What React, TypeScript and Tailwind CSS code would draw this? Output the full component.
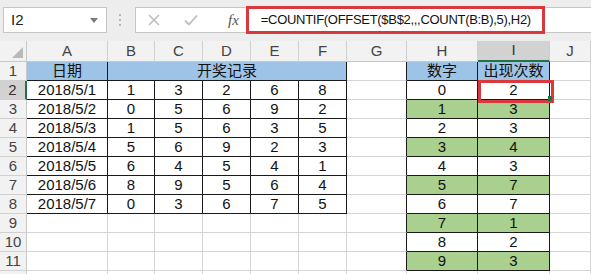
import React from "react";

const COLS = ["", "A", "B", "C", "D", "E", "F", "G", "H", "I", "J"];
const BLACK = "#1a1a1a";
const GRID = "#d4d4d4";

const left: string[][] = [
  ["2018/5/1", "1", "3", "2", "6", "8"],
  ["2018/5/2", "0", "5", "6", "9", "2"],
  ["2018/5/3", "1", "5", "6", "3", "5"],
  ["2018/5/4", "5", "6", "9", "2", "3"],
  ["2018/5/5", "6", "4", "5", "4", "1"],
  ["2018/5/6", "8", "9", "5", "6", "4"],
  ["2018/5/7", "0", "3", "6", "7", "5"],
];
const counts = ["2", "3", "3", "4", "3", "7", "7", "1", "2", "3"];

function inTable(r: number, c: number) {
  if (r >= 1 && r <= 8 && c >= 1 && c <= 6) return true;
  if (r >= 1 && r <= 11 && c >= 8 && c <= 9) return true;
  return false;
}

function cellContent(r: number, c: number): { text: string; bg: string } {
  let text = "";
  let bg = "#ffffff";
  if (r === 1) {
    if (c === 1) { text = "日期"; bg = "#9dc3e6"; }
    if (c === 8) { text = "数字"; bg = "#9dc3e6"; }
    if (c === 9) { text = "出现次数"; bg = "#9dc3e6"; }
  } else {
    if (r >= 2 && r <= 8 && c >= 1 && c <= 6) text = left[r - 2][c - 1];
    if (r >= 2 && r <= 11 && (c === 8 || c === 9)) {
      const n = r - 2;
      text = c === 8 ? String(n) : counts[n];
      if (n % 2 === 1) bg = "#a9d08e";
    }
  }
  return { text, bg };
}

export default function App() {
  const font = { fontFamily: '"Liberation Sans", "Noto Sans CJK SC", sans-serif' };
  const rows: React.ReactNode[] = [];

  COLS.forEach((col, c) => {
    if (c === 0) {
      rows.push(
        <div key="corner" className="relative h-[21px] border-r border-b border-[#c8c8c8] bg-[#f2f2f2]">
          <div
            className="absolute right-[3px] bottom-[3px] h-0 w-0"
            style={{ borderBottom: "11px solid #b9b9b9", borderLeft: "11px solid transparent" }}
          />
        </div>
      );
    } else {
      const sel = col === "I";
      rows.push(
        <div
          key={"h" + c}
          className={`flex h-[21px] items-center justify-center border-r border-r-[#d0d0d0] text-[15px] ${sel ? "bg-[#d2d2d2] border-b-2 border-b-[#217346] text-[#333]" : "bg-[#f2f2f2] border-b border-b-[#c8c8c8] text-[#444]"}`}
        >
          {col}
        </div>
      );
    }
  });

  for (let r = 1; r <= 12; r++) {
    const sel = r === 2;
    rows.push(
      <div
        key={"r" + r}
        className={`flex h-[19px] items-center justify-center border-b border-b-[#d0d0d0] text-[15px] ${sel ? "bg-[#d2d2d2] border-r-2 border-r-[#217346] text-[#333]" : "bg-[#f2f2f2] border-r border-r-[#c8c8c8] text-[#444]"}`}
      >
        {r <= 11 ? r : ""}
      </div>
    );
    for (let c = 1; c <= 10; c++) {
      if (r === 1 && c >= 3 && c <= 6) continue;
      const merged = r === 1 && c === 2;
      const lastC = merged ? 6 : c;
      const { text, bg } = merged ? { text: "开奖记录", bg: "#9dc3e6" } : cellContent(r, c);
      const rightBlack = inTable(r, lastC) || inTable(r, lastC + 1);
      const bottomBlack = inTable(r, c) || inTable(r + 1, c);
      rows.push(
        <div
          key={r + "-" + c}
          className={`flex h-[19px] items-center justify-center overflow-hidden whitespace-nowrap border-r border-b text-[15px] text-[#111] ${merged ? "col-span-5" : ""}`}
          style={{
            backgroundColor: bg,
            borderRightColor: rightBlack ? BLACK : GRID,
            borderBottomColor: bottomBlack ? BLACK : GRID,
          }}
        >
          {text}
        </div>
      );
    }
  }

  return (
    <div className="relative h-[274px] w-[591px] overflow-hidden bg-white" style={font}>
      {/* formula bar */}
      <div className="flex h-[41px] items-start bg-[#ededed] pt-[7px]">
        <div className="ml-[3px] flex h-[26px] w-[104px] items-center justify-between border border-[#c6c6c6] bg-white pl-[7px] pr-[8px] text-[15px] text-[#222]">
          <span>I2</span>
          <span className="h-0 w-0 border-x-[4px] border-t-[5px] border-x-transparent border-t-[#7a7a7a]" />
        </div>
        <div className="ml-[12px] mt-[7px] flex flex-col gap-[3px]">
          <span className="h-[2px] w-[2px] bg-[#b5b5b5]" />
          <span className="h-[2px] w-[2px] bg-[#b5b5b5]" />
          <span className="h-[2px] w-[2px] bg-[#b5b5b5]" />
        </div>
        <div className="ml-[14px] flex h-[26px] flex-1 items-center border border-r-0 border-[#c6c6c6] bg-white">
          <svg width="12" height="12" viewBox="0 0 12 12" className="ml-[12px]">
            <path d="M1 1 L11 11 M11 1 L1 11" stroke="#bdbdbd" strokeWidth="1.6" />
          </svg>
          <svg width="14" height="12" viewBox="0 0 14 12" className="ml-[24px]">
            <path d="M1 6.5 L5 10.5 L13 1.5" stroke="#bdbdbd" strokeWidth="1.8" fill="none" />
          </svg>
          <span className="ml-[30px] text-[15px] italic text-[#555]" style={{ fontFamily: '"Liberation Serif", serif' }}>
            fx
          </span>
          <div className="ml-[7px] flex h-[28px] w-[299px] shrink-0 items-center whitespace-nowrap border-[3px] border-[#d9383c] pl-[12px] text-[13px] tracking-[-0.3px] text-[#111]">
            =COUNTIF(OFFSET($B$2,,,COUNT(B:B),5),H2)
          </div>
        </div>
      </div>
      {/* sheet grid */}
      <div className="grid grid-cols-[27px_81px_47px_48px_48px_48px_48px_60px_71px_72px_1fr]">{rows}</div>
      {/* selected cell annotation */}
      <div className="absolute left-[478px] top-[80px] h-[23px] w-[76px] border-[3px] border-[#d9383c]" />
      <div className="absolute left-[548px] top-[96px] h-[5px] w-[4px] bg-[#217346]" />
    </div>
  );
}
